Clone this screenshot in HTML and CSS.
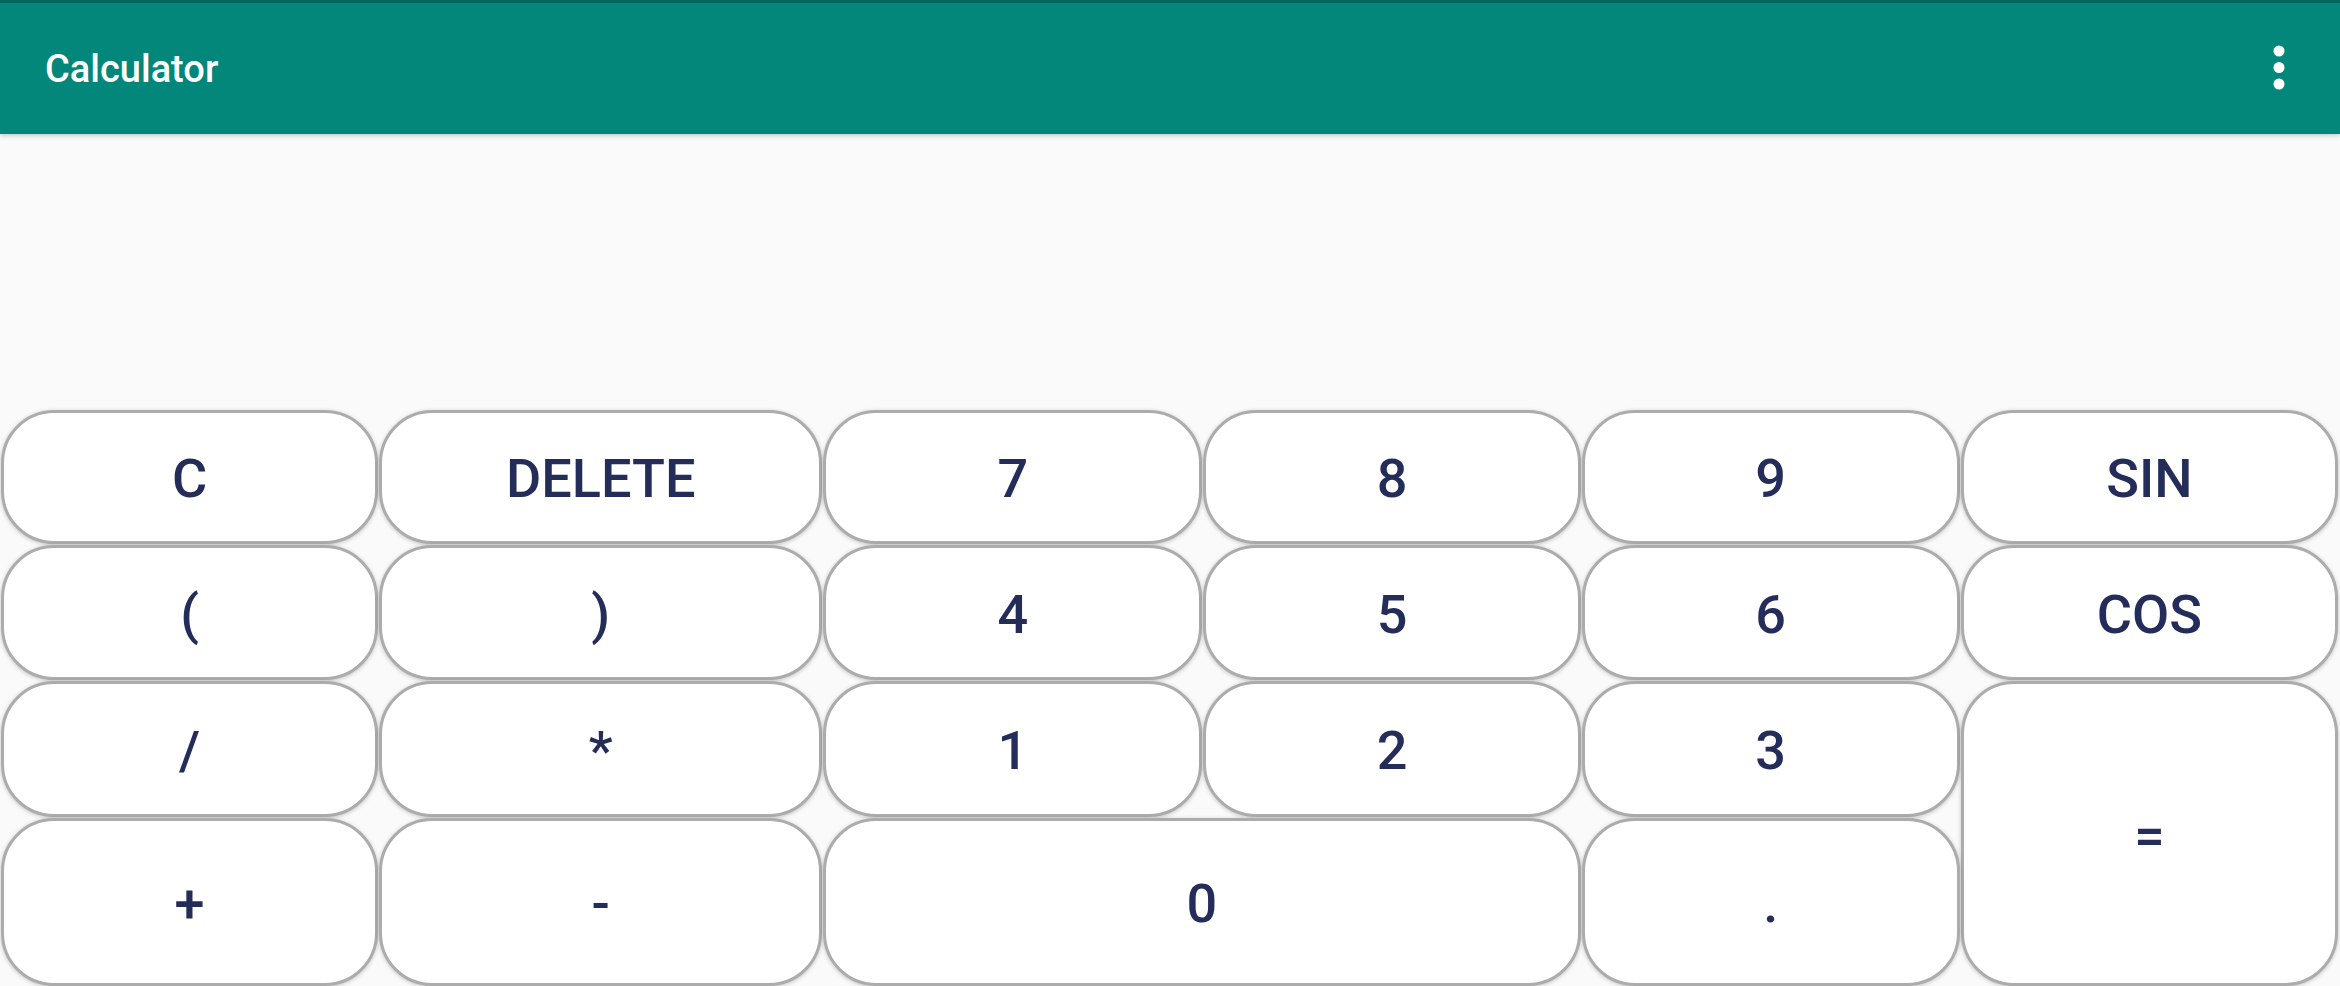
FILE: index.html
```html
<!DOCTYPE html>
<html lang="en">
<head>
<meta charset="utf-8">
<title>Calculator</title>
<link rel="stylesheet" href="styles.css">
</head>
<body>
<header class="appbar">
  <span class="title">Calculator</span>
  <button class="menu" aria-label="More options">
    <svg width="12" height="46" viewBox="0 0 12 46"><circle cx="6" cy="6" r="5.5" fill="#fff"/><circle cx="6" cy="22.5" r="5.5" fill="#fff"/><circle cx="6" cy="39" r="5.5" fill="#fff"/></svg>
  </button>
</header>
<main class="display"></main>
<section class="keypad">
  <button class="key">C</button>
  <button class="key">DELETE</button>
  <button class="key">7</button>
  <button class="key">8</button>
  <button class="key">9</button>
  <button class="key">SIN</button>
  <button class="key">(</button>
  <button class="key">)</button>
  <button class="key">4</button>
  <button class="key">5</button>
  <button class="key">6</button>
  <button class="key">COS</button>
  <button class="key">/</button>
  <button class="key">*</button>
  <button class="key">1</button>
  <button class="key">2</button>
  <button class="key">3</button>
  <button class="key key-tall">=</button>
  <button class="key">+</button>
  <button class="key">-</button>
  <button class="key key-wide">0</button>
  <button class="key">.</button>
</section>
</body>
</html>
```

FILE: styles.css
```css
html, body {
  margin: 0;
  padding: 0;
}
body {
  width: 2340px;
  height: 986px;
  overflow: hidden;
  background: #fafafa;
  font-family: Roboto, "Liberation Sans", sans-serif;
  display: flex;
  flex-direction: column;
}
.appbar {
  box-sizing: border-box;
  height: 134px;
  border-top: 3px solid #00675c;
  background: #02877a;
  display: flex;
  align-items: center;
  justify-content: space-between;
  padding: 0 55px 0 45px;
  box-shadow: 0 2px 4px rgba(0, 0, 0, 0.18);
  position: relative;
  z-index: 1;
  flex: none;
}
.title {
  color: #fff;
  font-size: 38px;
  font-weight: 500;
  line-height: 1;
}
.menu {
  background: none;
  border: 0;
  padding: 0;
  display: flex;
  margin-top: -2px;
}
.display {
  height: 276px;
  flex: none;
  background: #fafafa;
}
.keypad {
  flex: none;
  display: grid;
  grid-template-columns: 378fr 444fr 380fr 378fr 379fr 378fr;
  grid-template-rows: 134px 135px 136px 168px;
  gap: 1px;
  padding: 0 2px 0 1px;
}
.key {
  box-sizing: border-box;
  margin: 0;
  background: #fff;
  border: 3px solid #acacac;
  border-radius: 53px;
  box-shadow: 0 1px 4px rgba(0, 0, 0, 0.22);
  font-family: Roboto, "Liberation Sans", sans-serif;
  font-size: 54px;
  font-weight: 500;
  line-height: 1;
  color: #242c5a;
  padding: 4px 0 0 0;
  display: flex;
  align-items: center;
  justify-content: center;
}
.key-tall {
  grid-row: span 2;
}
.key-wide {
  grid-column: span 2;
}
```
